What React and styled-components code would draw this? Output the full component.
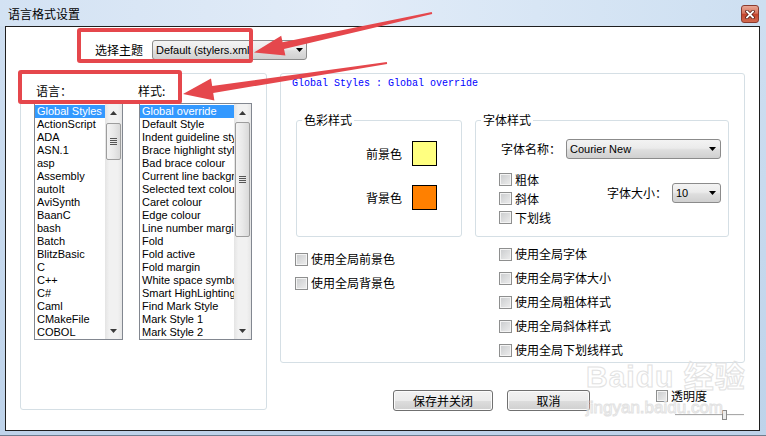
import React from 'react';
import styled, { createGlobalStyle } from 'styled-components';

const cjk = `"Noto Sans CJK SC", "Liberation Sans", sans-serif`;
const ui = `"Liberation Sans", "Noto Sans CJK SC", sans-serif`;

const GlobalStyle = createGlobalStyle`
  html, body {
    margin: 0;
    padding: 0;
    background: #fff;
  }
  body {
    font-family: ${ui};
  }
`;

const Window = styled.div`
  position: relative;
  width: 766px;
  height: 436px;
  box-sizing: border-box;
  display: flex;
  flex-direction: column;
  overflow: hidden;
  background: linear-gradient(#cfdff1, #bed3ea);
  border-bottom: 1px solid #6d7d8f;
`;

const TitleBar = styled.div`
  height: 26px;
  box-sizing: border-box;
  display: flex;
  align-items: flex-start;
  justify-content: space-between;
  padding: 5px 7px 0 8px;
  background: linear-gradient(to right, #d3e2f3, #e2ecf8 45%, #d8e6f5 70%, #cddff1);
`;

const Title = styled.div`
  font: 12px/18px ${cjk};
  color: #000;
`;

const CloseButton = styled.div`
  width: 18px;
  height: 18px;
  box-sizing: border-box;
  border: 1px solid #8a3b2f;
  border-radius: 3px;
  display: flex;
  align-items: center;
  justify-content: center;
  background: linear-gradient(#e9a795, #d7745e 45%, #c4442d 52%, #d26a4f);
`;

const Client = styled.div`
  height: 405px;
  margin: 0 6px 0 5px;
  box-sizing: border-box;
  border: 1px solid #1f1f1f;
  background: #fff;
  padding: 13px 0 0 14px;
`;

const ThemeRow = styled.div`
  display: flex;
  align-items: center;
  height: 20px;
  padding-left: 75px;
`;

const Label = styled.span`
  font: 12px/16px ${cjk};
  color: #000;
  white-space: nowrap;
  width: ${p => (p.$w ? `${p.$w}px` : 'auto')};
`;

const Combo = styled.div`
  width: ${p => p.$w}px;
  height: 20px;
  box-sizing: border-box;
  border: 1px solid #8b8b8b;
  border-radius: 3px;
  background: linear-gradient(#f3f3f3, #ebebeb 45%, #dedede 55%, #d0d0d0);
  display: flex;
  align-items: center;
  justify-content: space-between;
  padding: 0 ${p => p.$pr}px 0 3px;
  font: 11px ${ui};
  color: #000;
  white-space: nowrap;
  overflow: hidden;
`;

const MainRow = styled.div`
  display: flex;
  gap: 13px;
  margin-top: 13px;
`;

const LeftGroup = styled.div`
  width: 247px;
  height: 337px;
  box-sizing: border-box;
  border: 1px solid #d5dfe5;
  border-radius: 3px;
  padding-left: 13px;
`;

const LabelRow = styled.div`
  display: flex;
  height: 29px;
  box-sizing: border-box;
  padding: 9px 0 0 2px;
`;

const ListsRow = styled.div`
  display: flex;
  gap: 16px;
  height: 237px;
`;

const ListBox = styled.div`
  width: ${p => p.$w}px;
  box-sizing: border-box;
  border: 1px solid #828790;
  display: flex;
  background: #fff;
`;

const Items = styled.div`
  flex: 1;
  min-width: 0;
  overflow: hidden;
  padding-top: 1px;
`;

const Item = styled.div`
  height: 13px;
  font: 11px/13px ${ui};
  white-space: nowrap;
  padding-left: 2px;
  color: ${p => (p.$selected ? '#fff' : '#000')};
  background: ${p => (p.$selected ? '#3399ff' : 'transparent')};
`;

const Track = styled.div`
  width: 17px;
  display: flex;
  flex-direction: column;
  background: linear-gradient(to right, #e4e4e4, #f1f1f1 25%, #f1f1f1 75%, #e6e6e6);
`;

const ArrowCell = styled.div`
  height: 17px;
  display: flex;
  align-items: center;
  justify-content: center;
`;

const ThumbArea = styled.div`
  flex: 1;
`;

const Thumb = styled.div`
  margin: ${p => p.$top}px 1px 0 1px;
  height: ${p => p.$height}px;
  box-sizing: border-box;
  border: 1px solid #9d9d9d;
  border-radius: 2px;
  background: linear-gradient(to right, #f4f4f4, #e9e9e9 50%, #d9d9d9);
  display: flex;
  align-items: center;
  justify-content: center;
`;

const Grip = styled.span`
  width: 7px;
  height: 7px;
  background: repeating-linear-gradient(#555 0 1px, transparent 1px 2px);
`;

const RightColumn = styled.div`
  width: 465px;
  display: flex;
  flex-direction: column;
`;

const RightGroup = styled.div`
  height: 290px;
  box-sizing: border-box;
  border: 1px solid #d5dfe5;
  border-radius: 3px;
  padding-left: 15px;
`;

const Header = styled.div`
  margin: 4px 0 0 -4px;
  font: 10px/12px "Liberation Mono", "Courier New", monospace;
  color: #0000ff;
  white-space: pre;
`;

const GroupsRow = styled.div`
  display: flex;
  gap: 13px;
  margin-top: 22px;
`;

const Fieldset = styled.fieldset`
  width: ${p => p.$w}px;
  height: 125px;
  box-sizing: border-box;
  margin: 0;
  padding: 0;
  min-width: 0;
  border: 1px solid #d5dfe5;
  border-radius: 3px;
`;

const Legend = styled.legend`
  margin-left: 5px;
  padding: 0 2px;
  font: 12px/16px ${cjk};
  color: #000;
`;

const ColorRows = styled.div`
  display: flex;
  flex-direction: column;
  align-items: flex-end;
  gap: 19px;
  padding: 13px 24px 0 0;
`;

const ColorRow = styled.div`
  display: flex;
  align-items: center;
  gap: 10px;
`;

const Swatch = styled.div`
  width: 25px;
  height: 25px;
  box-sizing: border-box;
  border: 1px solid #000;
  background: ${p => p.$color};
`;

const FontBody = styled.div`
  padding: 11px 7px 0 23px;
`;

const FontNameRow = styled.div`
  display: flex;
  justify-content: flex-end;
  align-items: center;
  gap: 5px;
`;

const FontBottom = styled.div`
  display: flex;
  margin-top: 11px;
`;

const CheckColumn = styled.div`
  display: flex;
  flex-direction: column;
`;

const CheckRow = styled.label`
  display: flex;
  align-items: center;
  gap: ${p => p.$gap || 3}px;
  height: ${p => p.$h}px;
  font: 12px/16px ${cjk};
  color: #000;
  white-space: nowrap;
`;

const Box = styled.span`
  width: ${p => p.$size || 13}px;
  height: ${p => p.$size || 13}px;
  box-sizing: border-box;
  flex: none;
  border: 1px solid #8e8f8f;
  box-shadow: inset 0 0 0 1px #f4f4f4;
  background: linear-gradient(135deg, #c9cbcd, #eeeeee);
`;

const SizeRow = styled.div`
  display: flex;
  align-items: center;
  gap: 5px;
  margin: 13px 0 0 auto;
  height: 20px;
`;

const OptionsRow = styled.div`
  display: flex;
  margin-left: -1px;
`;

const OptionColumn = styled.div`
  width: ${p => p.$w}px;
  display: flex;
  flex-direction: column;
  padding-top: ${p => p.$top}px;
`;

const BottomRow = styled.div`
  display: flex;
  align-items: flex-start;
  margin-top: 27px;
  padding-left: 113px;
`;

const Button = styled.button`
  width: ${p => p.$w}px;
  height: 21px;
  margin-right: ${p => p.$mr || 0}px;
  padding: 0;
  box-sizing: border-box;
  border: 1px solid #707070;
  border-radius: 3px;
  box-shadow: inset 0 0 0 1px #fbfbfb;
  background: linear-gradient(#f2f2f2, #ebebeb 50%, #dddddd 51%, #cfcfcf);
  font: 12px/16px ${cjk};
  color: #000;
`;

const Opacity = styled.div`
  margin: -3px 0 0 66px;
  display: flex;
  flex-direction: column;
`;

const Slider = styled.div`
  position: relative;
  width: 69px;
  height: 10px;
  margin: 5px 0 0 19px;
`;

const SliderTrack = styled.div`
  margin-top: 4px;
  height: 1px;
  background: #a9a9a9;
  border-bottom: 1px solid #f4f4f4;
`;

const SliderThumb = styled.div`
  position: absolute;
  left: 47px;
  top: 0;
  width: 5px;
  height: 10px;
  box-sizing: border-box;
  border: 1px solid #8a8a8a;
  background: #ececec;
`;

const Watermark = styled.div`
  position: absolute;
  left: 586px;
  top: 360px;
  display: flex;
  flex-direction: column;
  color: transparent;
  -webkit-text-stroke: 1px #e2e2e2;
  pointer-events: none;
`;

const MarkTitle = styled.span`
  font: bold 30px/34px ${ui};
  letter-spacing: 1px;
`;

const MarkUrl = styled.span`
  font: 17px/20px ${ui};
  margin-top: 4px;
`;

const RedBox = styled.div`
  position: absolute;
  left: ${p => p.$x}px;
  top: ${p => p.$y}px;
  width: ${p => p.$w}px;
  height: ${p => p.$h}px;
  box-sizing: border-box;
  border: 4px solid #e5474c;
  border-radius: 3px;
  pointer-events: none;
`;

const Overlay = styled.svg`
  position: absolute;
  left: 0;
  top: 0;
  pointer-events: none;
`;

const languages = [
  'Global Styles', 'ActionScript', 'ADA', 'ASN.1', 'asp', 'Assembly', 'autoIt',
  'AviSynth', 'BaanC', 'bash', 'Batch', 'BlitzBasic', 'C', 'C++', 'C#', 'Caml',
  'CMakeFile', 'COBOL',
];

const styles = [
  'Global override', 'Default Style', 'Indent guideline style', 'Brace highlight style',
  'Bad brace colour', 'Current line background colour', 'Selected text colour',
  'Caret colour', 'Edge colour', 'Line number margin', 'Fold', 'Fold active',
  'Fold margin', 'White space symbol', 'Smart HighLighting', 'Find Mark Style',
  'Mark Style 1', 'Mark Style 2',
];

const DownArrow = ({ color = '#000' }) => (
  <svg width="7" height="4" viewBox="0 0 7 4">
    <path d="M0 0 H7 L3.5 4 Z" fill={color} />
  </svg>
);

const UpArrow = () => (
  <svg width="7" height="4" viewBox="0 0 7 4">
    <path d="M0 4 H7 L3.5 0 Z" fill="#3a3a3a" />
  </svg>
);

function ScrollBar({ top, height }) {
  return (
    <Track>
      <ArrowCell><UpArrow /></ArrowCell>
      <ThumbArea>
        <Thumb $top={top} $height={height}><Grip /></Thumb>
      </ThumbArea>
      <ArrowCell><DownArrow color="#3a3a3a" /></ArrowCell>
    </Track>
  );
}

function List({ width, items, thumbTop, thumbHeight }) {
  return (
    <ListBox $w={width}>
      <Items>
        {items.map((item, i) => (
          <Item key={item} $selected={i === 0}>{item}</Item>
        ))}
      </Items>
      <ScrollBar top={thumbTop} height={thumbHeight} />
    </ListBox>
  );
}

function Check({ children, h, gap, size }) {
  return (
    <CheckRow $h={h} $gap={gap}>
      <Box $size={size} />
      {children}
    </CheckRow>
  );
}

export default function App() {
  return (
    <>
      <GlobalStyle />
      <Window>
        <TitleBar>
          <Title>语言格式设置</Title>
          <CloseButton>
            <svg width="10" height="9" viewBox="0 0 10 9">
              <path d="M2 1.5 L8 7.5 M8 1.5 L2 7.5" stroke="#5a1d14" strokeWidth="3.4" strokeLinecap="square" />
              <path d="M2 1.5 L8 7.5 M8 1.5 L2 7.5" stroke="#fff" strokeWidth="1.8" strokeLinecap="square" />
            </svg>
          </CloseButton>
        </TitleBar>

        <Client>
          <ThemeRow>
            <Label $w={57}>选择主题</Label>
            <Combo $w={155} $pr={3}>
              <span>Default (stylers.xml)</span>
              <DownArrow />
            </Combo>
          </ThemeRow>

          <MainRow>
            <LeftGroup>
              <LabelRow>
                <Label $w={102}>语言：</Label>
                <Label>样式:</Label>
              </LabelRow>
              <ListsRow>
                <List width={89} items={languages} thumbTop={2} thumbHeight={37} />
                <List width={113} items={styles} thumbTop={1} thumbHeight={115} />
              </ListsRow>
            </LeftGroup>

            <RightColumn>
              <RightGroup>
                <Header>Global Styles : Global override</Header>
                <GroupsRow>
                  <Fieldset $w={166}>
                    <Legend>色彩样式</Legend>
                    <ColorRows>
                      <ColorRow>
                        <Label>前景色</Label>
                        <Swatch $color="#ffff80" />
                      </ColorRow>
                      <ColorRow>
                        <Label>背景色</Label>
                        <Swatch $color="#ff8000" />
                      </ColorRow>
                    </ColorRows>
                  </Fieldset>

                  <Fieldset $w={254}>
                    <Legend>字体样式</Legend>
                    <FontBody>
                      <FontNameRow>
                        <Label>字体名称：</Label>
                        <Combo $w={155} $pr={4}>
                          <span>Courier New</span>
                          <DownArrow />
                        </Combo>
                      </FontNameRow>
                      <FontBottom>
                        <CheckColumn>
                          <Check h={19}>粗体</Check>
                          <Check h={19}>斜体</Check>
                          <Check h={19}>下划线</Check>
                        </CheckColumn>
                        <SizeRow>
                          <Label>字体大小：</Label>
                          <Combo $w={49} $pr={4}>
                            <span>10</span>
                            <DownArrow />
                          </Combo>
                        </SizeRow>
                      </FontBottom>
                    </FontBody>
                  </Fieldset>
                </GroupsRow>

                <OptionsRow>
                  <OptionColumn $w={204} $top={10}>
                    <Check h={24}>使用全局前景色</Check>
                    <Check h={24}>使用全局背景色</Check>
                  </OptionColumn>
                  <OptionColumn $w={240} $top={5}>
                    <Check h={24}>使用全局字体</Check>
                    <Check h={24}>使用全局字体大小</Check>
                    <Check h={24}>使用全局粗体样式</Check>
                    <Check h={24}>使用全局斜体样式</Check>
                    <Check h={24}>使用全局下划线样式</Check>
                  </OptionColumn>
                </OptionsRow>
              </RightGroup>

              <BottomRow>
                <Button $w={100} $mr={14}>保存并关闭</Button>
                <Button $w={83}>取消</Button>
                <Opacity>
                  <Check h={18} gap={3} size={12}>透明度</Check>
                  <Slider>
                    <SliderTrack />
                    <SliderThumb />
                  </Slider>
                </Opacity>
              </BottomRow>
            </RightColumn>
          </MainRow>
        </Client>

        <Watermark>
          <MarkTitle>Baidu 经验</MarkTitle>
          <MarkUrl>jingyan.baidu.com</MarkUrl>
        </Watermark>

        <RedBox $x={77} $y={28} $w={176} $h={35} />
        <RedBox $x={18} $y={70} $w={164} $h={34} />
        <Overlay width="766" height="436" viewBox="0 0 766 436">
          <polygon
            points="432.2,14.0 284.0,49.0 285.4,55.4 254,52.5 281.2,35.8 282.6,42.2 431.8,12.0"
            fill="#e5474c"
          />
          <polygon
            points="387.15,64.0 213.2,93.0 214.4,100.4 183,94 211.0,78.6 212.2,86.0 386.85,62.0"
            fill="#e5474c"
          />
        </Overlay>
      </Window>
    </>
  );
}
